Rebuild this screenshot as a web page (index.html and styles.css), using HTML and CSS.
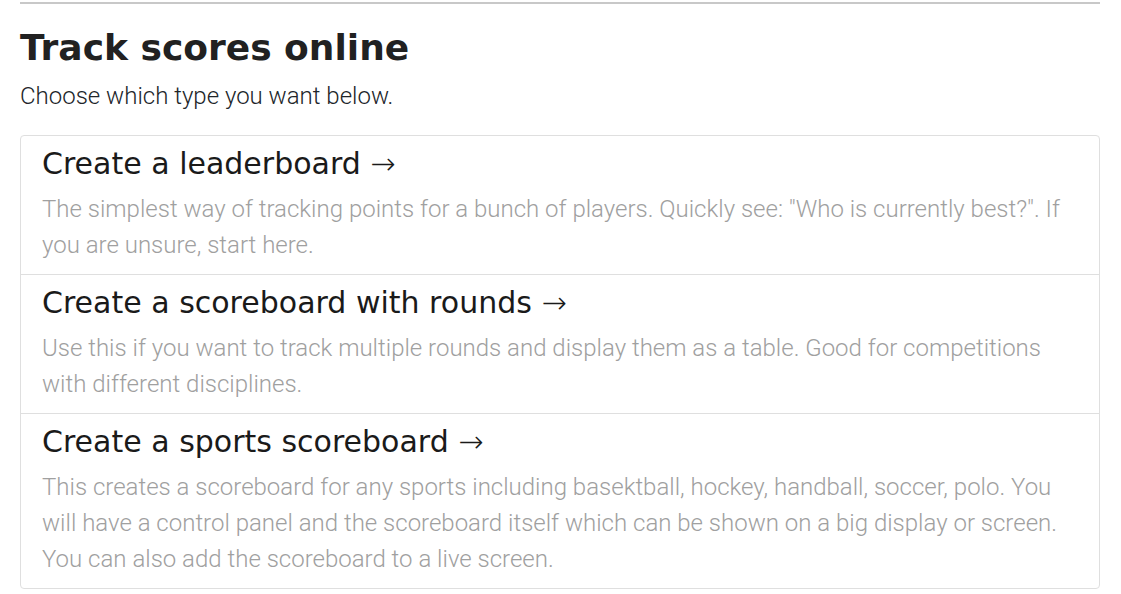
FILE: index.html
```html
<!DOCTYPE html>
<html lang="en">
<head>
<meta charset="utf-8">
<title>Track scores online</title>
<link rel="stylesheet" href="styles.css">
</head>
<body>
<div class="container">
  <hr class="rule">
  <h1 class="page-title">Track scores online</h1>
  <p class="lead">Choose which type you want below.</p>
  <div class="list-group">
    <a class="list-item" href="#">
      <h2 class="item-title">Create a leaderboard <span class="arrow">→</span></h2>
      <p class="item-desc">The simplest way of tracking points for a bunch of players. Quickly see: "Who is currently best?". If you are unsure, start here.</p>
    </a>
    <a class="list-item" href="#">
      <h2 class="item-title">Create a scoreboard with rounds <span class="arrow">→</span></h2>
      <p class="item-desc">Use this if you want to track multiple rounds and display them as a table. Good for competitions with different disciplines.</p>
    </a>
    <a class="list-item" href="#">
      <h2 class="item-title">Create a sports scoreboard <span class="arrow">→</span></h2>
      <p class="item-desc">This creates a scoreboard for any sports including basektball, hockey, handball, soccer, polo. You will have a control panel and the scoreboard itself which can be shown on a big display or screen. You can also add the scoreboard to a live screen.</p>
    </a>
  </div>
</div>
</body>
</html>
```
FILE: styles.css
```css
html, body {
  margin: 0;
  padding: 0;
  background: #fff;
}
body {
  font-family: Roboto, "Liberation Sans", sans-serif;
  font-weight: 300;
  color: #212529;
}
.container {
  width: 1080px;
  margin: 0 auto;
  padding: 0 21px 0 20px;
}
.rule {
  margin: 2px 0 0;
  border: 0;
  border-top: 2px solid #c8c8c8;
  height: 0;
}
.page-title {
  margin: 22px 0 0;
  font-family: "DejaVu Sans", sans-serif;
  font-weight: 700;
  font-size: 36px;
  line-height: 44px;
  color: #212121;
}
.lead {
  margin: 8px 0 0;
  font-size: 24px;
  line-height: 36px;
  color: #212529;
}
.list-group {
  margin-top: 21px;
  border: 1px solid #dfdfdf;
  border-radius: 4px;
  display: flex;
  flex-direction: column;
}
.list-item {
  display: block;
  padding: 10px 21px 11px;
  text-decoration: none;
  border-top: 1px solid #dfdfdf;
}
.list-item:first-child {
  border-top: 0;
}
.item-title {
  margin: 0 0 9px;
  font-family: "DejaVu Sans", sans-serif;
  font-weight: 400;
  font-size: 30px;
  line-height: 36px;
  color: #1a1a1a;
}
.arrow {
  font-weight: 200;
}
.item-desc {
  margin: 0;
  font-size: 24px;
  line-height: 36px;
  color: #a0a0a0;
}
```
